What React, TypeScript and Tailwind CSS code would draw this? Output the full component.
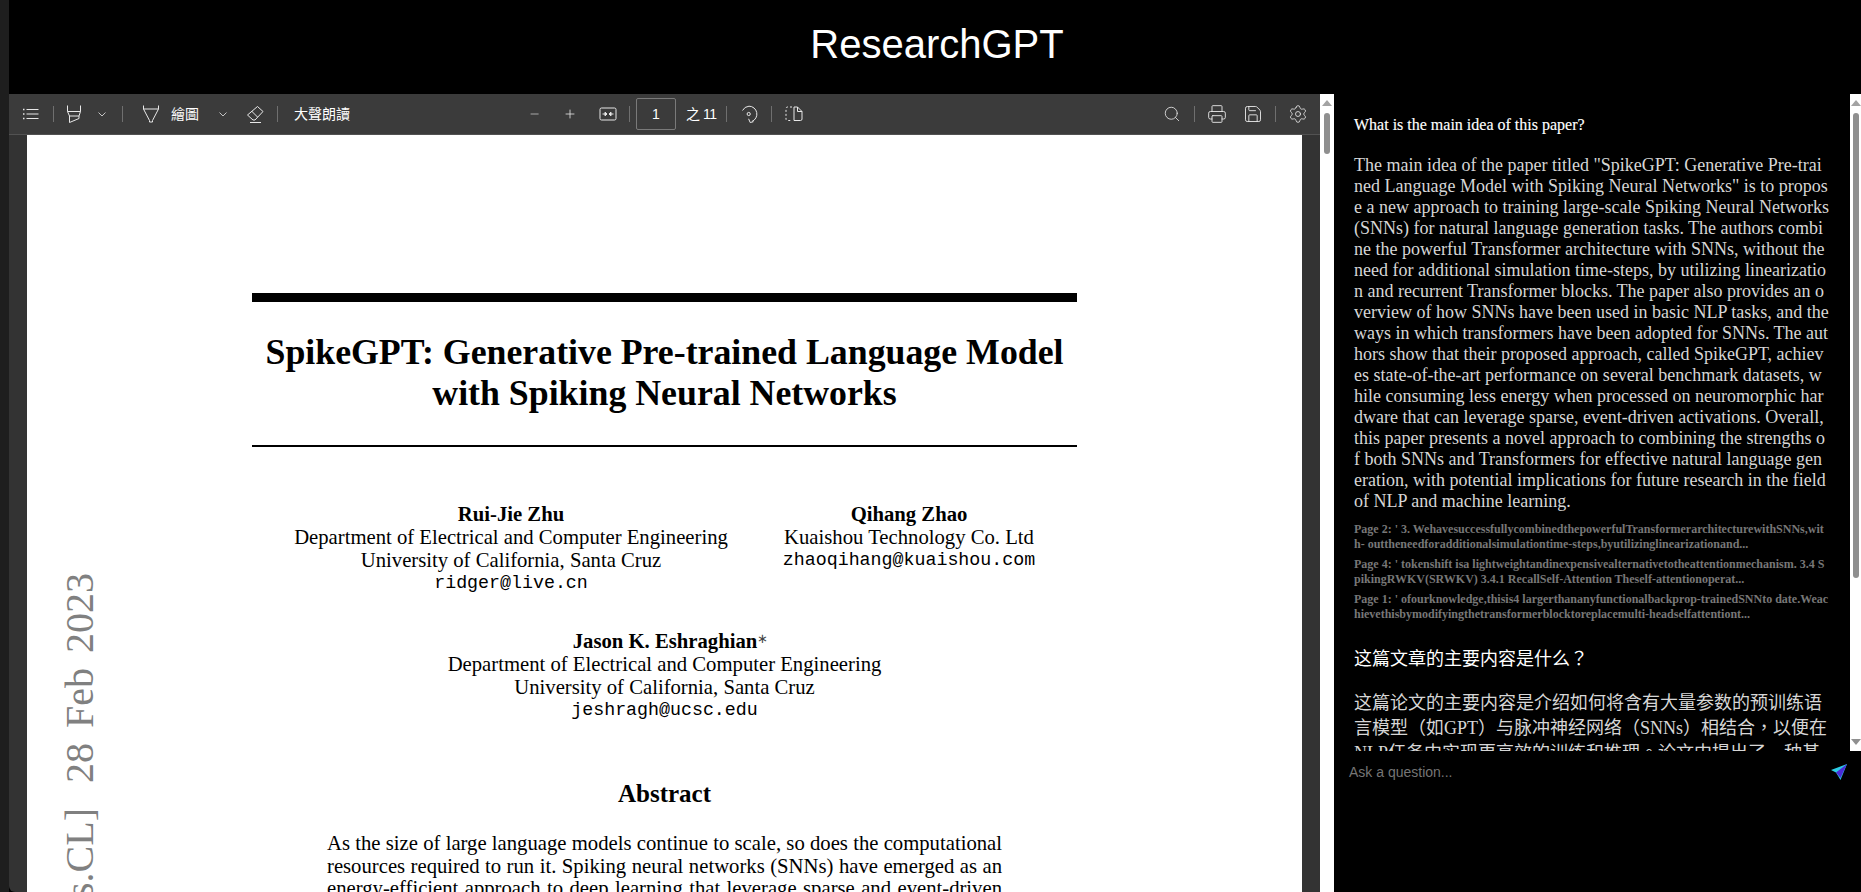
import React from "react";
import { Search, Printer, Save, Settings } from "lucide-react";

const ic = "block text-[#e8e8e8]";
const S = ({ children, w = 20, h = 20 }: { children: React.ReactNode; w?: number; h?: number }) => (
  <svg width={w} height={h} viewBox="0 0 20 20" fill="none" stroke="currentColor" strokeWidth="1" className={ic}>
    {children}
  </svg>
);

const Sep = ({ c }: { c: string }) => <div className={`w-px h-[16px] bg-[#6f6f6f] shrink-0 ${c}`} />;
const Chev = () => (
  <svg width="16" height="16" viewBox="0 0 16 16" fill="none" stroke="#c4c4c4" strokeWidth="1" className="block">
    <path d="M4.5 6.5 8 10l3.5-3.5" />
  </svg>
);

const answer =
  'The main idea of the paper titled "SpikeGPT: Generative Pre-trained Language Model with Spiking Neural Networks" is to propose a new approach to training large-scale Spiking Neural Networks (SNNs) for natural language generation tasks. The authors combine the powerful Transformer architecture with SNNs, without the need for additional simulation time-steps, by utilizing linearization and recurrent Transformer blocks. The paper also provides an overview of how SNNs have been used in basic NLP tasks, and the ways in which transformers have been adopted for SNNs. The authors show that their proposed approach, called SpikeGPT, achieves state-of-the-art performance on several benchmark datasets, while consuming less energy when processed on neuromorphic hardware that can leverage sparse, event-driven activations. Overall, this paper presents a novel approach to combining the strengths of both SNNs and Transformers for effective natural language generation, with potential implications for future research in the field of NLP and machine learning.';

const sources = [
  "Page 2: ' 3. WehavesuccessfullycombinedthepowerfulTransformerarchitecturewithSNNs,with- outtheneedforadditionalsimulationtime-steps,byutilizinglinearizationand...",
  "Page 4: ' tokenshift isa lightweightandinexpensivealternativetotheattentionmechanism. 3.4 SpikingRWKV(SRWKV) 3.4.1 RecallSelf-Attention Theself-attentionoperat...",
  "Page 1: ' ofourknowledge,thisis4 largerthananyfunctionalbackprop-trainedSNNto date.Weachievethisbymodifyingthetransformerblocktoreplacemulti-headselfattentiont...",
];

const serif = "font-['Liberation_Serif','Noto_Sans_CJK_TC',serif]";

function Toolbar() {
  return (
    <div className="h-[41px] shrink-0 bg-[#3b3b3b] border-b border-[#525252] flex items-center text-white text-[14px] font-['Liberation_Sans','Noto_Sans_CJK_TC',sans-serif]">
      <div className="w-[32px] ml-[6px] flex justify-center shrink-0">
        <S>
          <path d="M5.5 5.5h12M5.5 10h12M5.5 14.5h12" />
          <path d="M2 5.5h1.5M2 10h1.5M2 14.5h1.5" strokeWidth="1.6" />
        </S>
      </div>
      <Sep c="ml-[6px]" />
      <div className="w-[40px] flex justify-center shrink-0">
        <S>
          <path d="M3.5 1.5v6l2 4.5v6.5l9.5-4v-2.5l1.5-4.5v-6M3.5 7.5h13M5.5 12h9.5" />
        </S>
      </div>
      <div className="w-[16px] shrink-0"><Chev /></div>
      <Sep c="ml-[12px]" />
      <div className="w-[24px] ml-[16px] flex justify-center shrink-0">
        <S>
          <path d="M2.5 1.5V5l6 11.5V18h3v-1.5l6-11.5V1.5M2.5 5h15" />
        </S>
      </div>
      <span lang="zh-Hant" className="ml-[8px] w-[28px] shrink-0 whitespace-nowrap">繪圖</span>
      <div className="ml-[16px] w-[16px] shrink-0"><Chev /></div>
      <div className="ml-[12px] w-[24px] flex justify-center shrink-0">
        <S>
          <path d="M12.5 2.5 18 7.5l-8 8.5H8L2.5 11zM6.5 7l6 6M5 18.5h11" />
        </S>
      </div>
      <Sep c="ml-[10px]" />
      <span lang="zh-Hant" className="ml-[16px] w-[56px] shrink-0 whitespace-nowrap">大聲朗讀</span>

      <div className="ml-[177px] w-[16px] flex justify-center shrink-0">
        <S><path d="M4.5 10h10" stroke="#a8a8a8" strokeWidth="1.4" /></S>
      </div>
      <div className="ml-[19px] w-[16px] flex justify-center shrink-0">
        <S><path d="M4.5 10h11M10 4.5v11" /></S>
      </div>
      <div className="ml-[20px] w-[20px] flex justify-center shrink-0">
        <S>
          <rect x="2" y="4" width="16" height="12" rx="1.5" />
          <path d="M4.5 10h3.5M12 10h3.5" />
          <path d="M7 8.2v3.6l2-1.8zM13 8.2v3.6l-2-1.8z" fill="currentColor" />
        </S>
      </div>
      <Sep c="ml-[11px]" />
      <div className="ml-[6px] w-[40px] h-[32px] shrink-0 border border-[#7a7a7a] rounded-[2px] flex items-center justify-center">1</div>
      <span lang="zh-Hant" className="ml-[10px] w-[28px] shrink-0 whitespace-nowrap tracking-[-0.5px]">之 11</span>
      <Sep c="ml-[12px]" />
      <div className="ml-[10px] w-[24px] flex justify-center shrink-0">
        <S>
          <path d="M3.5 6.5A8 8 0 0 1 10 2.2a7.9 7.9 0 0 1 3 15.2" />
          <path d="M9.6 14.8l1.6 3.7 3.3-.8" />
          <circle cx="9.7" cy="10" r="1.6" />
        </S>
      </div>
      <Sep c="ml-[10px]" />
      <div className="ml-[12px] w-[20px] flex justify-center shrink-0">
        <S>
          <path d="M10 3h3.5L18 7.5V15a1.5 1.5 0 0 1-1.5 1.5H10zM13.5 3v4.5H18" />
          <path d="M8 3H3.5A1.5 1.5 0 0 0 2 4.5V15a1.5 1.5 0 0 0 1.5 1.5H8" strokeDasharray="2 2" />
        </S>
      </div>

      <div className="ml-auto w-[20px] flex justify-center shrink-0">
        <Search size={18} strokeWidth={1.1} className={ic} />
      </div>
      <Sep c="ml-[12px]" />
      <div className="ml-[12px] w-[20px] flex justify-center shrink-0">
        <Printer size={20} strokeWidth={1.1} className={ic} />
      </div>
      <div className="ml-[16px] w-[20px] flex justify-center shrink-0">
        <Save size={20} strokeWidth={1.1} className={ic} />
      </div>
      <Sep c="ml-[12px]" />
      <div className="ml-[12px] mr-[12px] w-[20px] flex justify-center shrink-0">
        <Settings size={20} strokeWidth={1} className={ic} />
      </div>
    </div>
  );
}

function Page() {
  return (
    <div className="relative w-[1275px] h-full overflow-hidden bg-white text-black font-['Liberation_Serif',serif] px-[225px] pt-[158px]">
      <div className="absolute left-[31px] top-[438px] [writing-mode:vertical-rl] rotate-180 text-[40px] leading-[44px] [word-spacing:5px] text-[#808080] whitespace-pre">
        arXiv:2302.13939v1  [cs.CL] <span className="inline-block h-[10px]" />28 Feb 2023
      </div>
      <div className="h-[9px] bg-black" />
      <h1 className="mt-[30px] text-center font-bold text-[35.8px] leading-[41px] whitespace-nowrap">
        SpikeGPT: Generative Pre-trained Language Model
        <br />
        with Spiking Neural Networks
      </h1>
      <div className="mt-[31px] h-[2px] bg-black" />
      <div className="mt-[56px] flex text-[20.7px] leading-[23px] text-center">
        <div className="w-[518px] shrink-0">
          <div className="font-bold">Rui-Jie Zhu</div>
          <div>Department of Electrical and Computer Engineering</div>
          <div>University of California, Santa Cruz</div>
          <div className="font-['Liberation_Mono',monospace] text-[18.3px]">ridger@live.cn</div>
        </div>
        <div className="w-[278px] shrink-0">
          <div className="font-bold">Qihang Zhao</div>
          <div>Kuaishou Technology Co. Ltd</div>
          <div className="font-['Liberation_Mono',monospace] text-[18.3px]">zhaoqihang@kuaishou.com</div>
        </div>
      </div>
      <div className="mt-[35px] text-[20.7px] leading-[23px] text-center">
        <div className="h-[23px] pl-[12px]"><span className="font-bold">Jason K. Eshraghian</span><span className="text-[13px] align-[5px] leading-none text-[#444]">∗</span></div>
        <div>Department of Electrical and Computer Engineering</div>
        <div>University of California, Santa Cruz</div>
        <div className="font-['Liberation_Mono',monospace] text-[18.3px]">jeshragh@ucsc.edu</div>
      </div>
      <h2 className="mt-[57px] text-center font-bold text-[25px] leading-[30px]">Abstract</h2>
      <p className="mt-[23px] mx-[75px] text-[20.7px] leading-[22.5px] text-justify">
        As the size of large language models continue to scale, so does the computational resources required to run it. Spiking neural networks (SNNs) have emerged as an energy-efficient approach to deep learning that leverage sparse and event-driven activations to reduce the computational overhead associated with model inference.
      </p>
    </div>
  );
}

const Tri = ({ down, fill }: { down?: boolean; fill: string }) => (
  <svg width="10" height="6" viewBox="0 0 10 6" className="block">
    <path d={down ? "M0 0h10L5 6z" : "M5 0l5 6H0z"} fill={fill} />
  </svg>
);

export default function App() {
  return (
    <div className="h-[892px] w-[1861px] overflow-hidden flex bg-[#1e1e1e]">
      <div className="w-[9px] shrink-0" />
      <div className="flex-1 min-w-0 flex flex-col bg-black">
        <header className="h-[94px] shrink-0 flex items-start justify-center pt-[22px] pl-[4px] text-white text-[40px] leading-[44px] font-['Liberation_Sans',sans-serif]">
          ResearchGPT
        </header>
        <div className="flex-1 min-h-0 flex">
          <div className="w-[1311px] shrink-0 flex flex-col bg-[#333333] rounded-bl-[6px] overflow-hidden">
            <Toolbar />
            <div className="flex-1 min-h-0 pl-[18px]">
              <Page />
            </div>
          </div>
          <div className="w-[14px] shrink-0 bg-white flex flex-col items-center pt-[6px]">
            <Tri fill="#a3a3a3" />
            <div className="mt-[7px] w-[6px] h-[41px] rounded-full bg-[#8f8f8f]" />
          </div>
          <div className="flex-1 min-w-0 flex flex-col">
            <div className="h-[657px] shrink-0 flex">
              <div className={`flex-1 min-w-0 overflow-hidden pl-[20px] pr-[20px] pt-[20px] ${serif} [word-break:break-all]`}>
                <div className="text-white text-[16px] leading-[21px] [-webkit-text-stroke:0.15px_white]">What is the main idea of this paper?</div>
                <div className="mt-[20px] text-[#d6d6d6] text-[18px] leading-[21px]">{answer}</div>
                <div className="mt-[10px] text-[#777777] text-[12px] leading-[15px] font-bold">
                  {sources.map((s) => (
                    <div key={s} className="mb-[5px]">{s}</div>
                  ))}
                </div>
                <div lang="zh-Hant" className="mt-[25px] text-white text-[18px] leading-[25px]">这篇文章的主要内容是什么？</div>
                <div lang="zh-Hant" className="mt-[19px] text-[#d6d6d6] text-[18px] leading-[25px]">
                  这篇论文的主要内容是介绍如何将含有大量参数的预训练语言模型（如GPT）与脉冲神经网络（SNNs）相结合，以便在NLP任务中实现更高效的训练和推理。论文中提出了一种基于循环神经网络的新模型。
                </div>
              </div>
              <div className="w-[11px] shrink-0 bg-white flex flex-col items-center justify-between pt-[6px] pb-[6px]">
                <div className="flex flex-col items-center">
                  <Tri fill="#a3a3a3" />
                  <div className="mt-[7px] w-[6px] h-[465px] rounded-full bg-[#8f8f8f]" />
                </div>
                <Tri down fill="#8f8f8f" />
              </div>
            </div>
            <div className="flex items-start pl-[15px] pr-[13px] pt-[13px]">
              <span className="text-[14px] leading-[16px] text-[#757575] font-['Liberation_Sans',sans-serif]">Ask a question...</span>
              <svg width="18" height="18" viewBox="0 0 18 18" className="block ml-auto -mt-[1px]">
                <defs>
                  <linearGradient id="pl" x1="0" y1="0" x2="1" y2="1">
                    <stop offset="0" stopColor="#2ed6e6" />
                    <stop offset="1" stopColor="#28b8e0" />
                  </linearGradient>
                </defs>
                <path d="M17 1 1 7l5 2.5L10.5 17z" fill="url(#pl)" />
                <path d="M17 1 6 9.5l4.5 5.5z" fill="#4a2bd6" />
              </svg>
            </div>
          </div>
        </div>
      </div>
    </div>
  );
}
